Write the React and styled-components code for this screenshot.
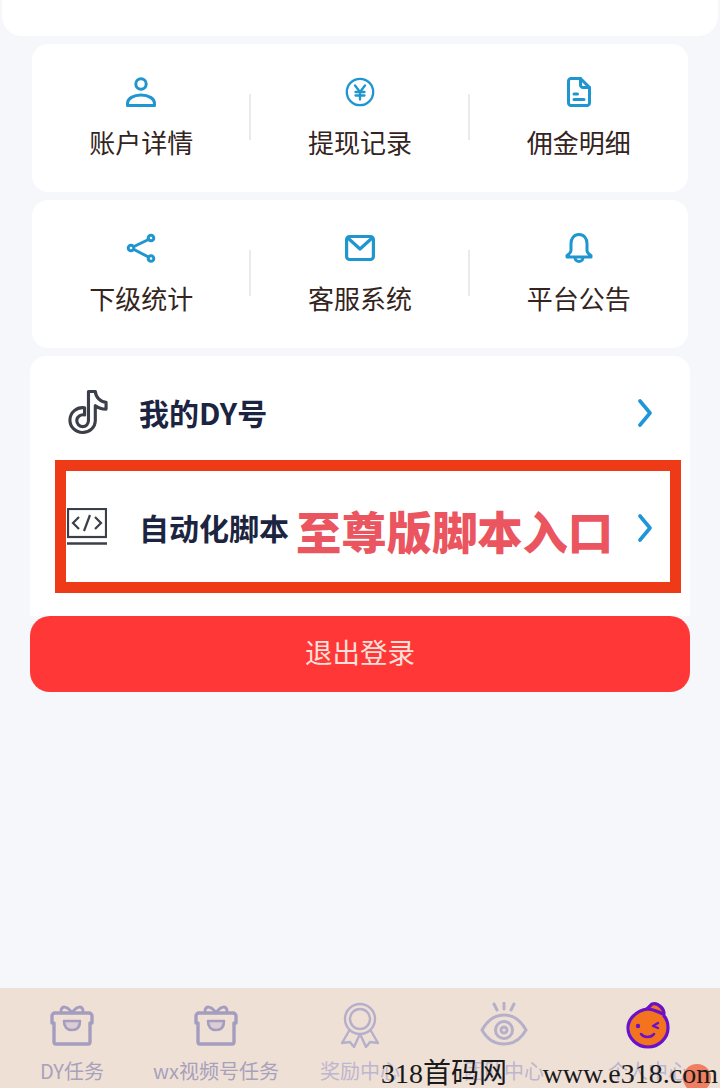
import styled, { createGlobalStyle } from "styled-components";

const GlobalStyle = createGlobalStyle`
  html, body {
    margin: 0;
    padding: 0;
    background: #f5f7fb;
    font-family: "Noto Sans CJK SC", "Liberation Sans", sans-serif;
  }
  * {
    box-sizing: border-box;
  }
`;

const BLUE = "#1f96cf";
const TAB = "#a49dc0";
const TAB_LIGHT = "#b5afca";

const Icon = ({ size = 30, color = BLUE, width = 3, children }) => (
  <svg
    width={size}
    height={size}
    viewBox="0 0 30 30"
    fill="none"
    stroke={color}
    strokeWidth={width}
    strokeLinecap="round"
    strokeLinejoin="round"
  >
    {children}
  </svg>
);

const PersonIcon = () => (
  <Icon>
    <circle cx="15" cy="7" r="5.200" />
    <path d="M1.500 28.500v-2c0-5 6-8.500 13.500-8.500s13.500 3.500 13.500 8.500v2z" />
  </Icon>
);

const YuanIcon = () => (
  <Icon width={2.300}>
    <circle cx="15" cy="15" r="13.200" />
    <path d="M10 8.500l5 6.500 5-6.500M15 15v7.500M10.500 15h9M10.500 18.500h9" />
  </Icon>
);

const DocIcon = () => (
  <Icon>
    <path d="M7 1.500h9.500l9 9v15.500a2.500 2.500 0 0 1-2.500 2.500H7a2.500 2.500 0 0 1-2.500-2.500V4A2.500 2.500 0 0 1 7 1.500z" />
    <path d="M16.500 1.500v6.500a2.500 2.500 0 0 0 2.500 2.500h6.500M10 17h3.500M10 22.500h10" />
  </Icon>
);

const ShareIcon = () => (
  <Icon>
    <circle cx="25" cy="5" r="2.800" />
    <circle cx="5" cy="15" r="2.800" />
    <circle cx="25" cy="25.500" r="2.800" />
    <path d="M8 13.500l14.500-7M8 16.500l14.500 7.500" />
  </Icon>
);

const MailIcon = () => (
  <Icon width={3.200}>
    <rect x="1.600" y="3.500" width="26.800" height="23" rx="3" />
    <path d="M4 6l11 10 11-10" />
  </Icon>
);

const BellIcon = () => (
  <Icon>
    <path d="M15 1.500c-5 0-8 4-8 9v7c0 2-1.500 3.500-4 5v1.500h24v-1.500c-2.500-1.500-4-3-4-5v-7c0-5-3-9-8-9z" />
    <path d="M11 24.500c0 2.500 2 4 4 4s4-1.500 4-4" />
  </Icon>
);

const NoteIcon = () => (
  <svg width="41" height="46" viewBox="0 0 42 46" fill="none" stroke="#3b3f49" strokeWidth="3.200" strokeLinejoin="round">
    <path d="M22 2h7c.5 6 5 10.500 11 11v7c-4.200 0-8-1.200-11-3.500v15c0 7.500-6 12.500-13 12.500S3 38.500 3 31.500c0-8 7-14 15-12.800v7.300c-4-1-8 1.800-8 5.800 0 3.500 2.800 6.200 6 6.200 3.500 0 6-2.700 6-6.500z" />
  </svg>
);

const CodeIcon = () => (
  <svg width="40" height="38" viewBox="0 0 40 38" fill="none" stroke="#3b3f49" strokeWidth="2.200">
    <rect x="1" y="1" width="38" height="28" />
    <path d="M0 35.500h40" strokeWidth="2.600" />
    <path d="M12 9l-6 6 6 6M28 9l6 6-6 6M23 7l-6 16" />
  </svg>
);

const Chevron = () => (
  <svg width="16" height="28" viewBox="0 0 16 28" fill="none" stroke="#1e96d8" strokeWidth="3.600" strokeLinecap="round" strokeLinejoin="round">
    <path d="M3 2l10 12L3 26" />
  </svg>
);

const GiftIcon = () => (
  <svg width="44" height="42" viewBox="0 0 44 42" fill="none" stroke={TAB} strokeWidth="3.400" strokeLinecap="round" strokeLinejoin="round">
    <path d="M11 7c0-5 6-6 11 2 5-8 11-7 11-2" strokeWidth="3" />
    <path d="M2 19v-7a3 3 0 0 1 3-3h34a3 3 0 0 1 3 3v7" />
    <path d="M4 19v19a2 2 0 0 0 2 2h32a2 2 0 0 0 2-2V19" />
    <path d="M14 17h16c0 6-3 9-8 9s-8-3-8-9z" fill="#ddcdd3" strokeWidth="2.600" />
  </svg>
);

const AwardIcon = () => (
  <svg width="44" height="46" viewBox="0 0 44 46" fill="none" stroke={TAB_LIGHT} strokeWidth="2.400" strokeLinecap="round" strokeLinejoin="round">
    <circle cx="22" cy="17" r="15" />
    <circle cx="22" cy="17" r="10" />
    <path d="M11 29L4 41l8-1 4 5 5-11M33 29l7 12-8-1-4 5-5-11" />
  </svg>
);

const EyeIcon = () => (
  <svg width="48" height="46" viewBox="0 0 48 46" fill="none" stroke={TAB_LIGHT} strokeWidth="3" strokeLinecap="round">
    <path d="M14 2l3 6M24 1v6M34 2l-3 6" />
    <path d="M2 28c5-9 13-15 22-15s17 6 22 15c-5 9-13 14-22 14S7 37 2 28z" />
    <circle cx="24" cy="28" r="8.500" />
    <circle cx="24" cy="28" r="3" />
  </svg>
);

const OrangeIcon = () => (
  <svg width="46" height="48" viewBox="0 0 46 48" fill="none" stroke="#6a12c8" strokeWidth="3.200" strokeLinecap="round" strokeLinejoin="round">
    <circle cx="24" cy="26" r="19.500" fill="#f3731e" stroke="none" />
    <path d="M22 8C11 10 3 18 3 27c0 10 9 19 20 19s20-9 20-19c0-5-1-9-4-12" />
    <path d="M22 8l5-5c3-1 6 0 9 3 2 2 3 4 3 7-5-1-9-5-17-5z" fill="#f3731e" />
    <circle cx="13" cy="25" r="2.200" fill="#6a12c8" stroke="none" />
    <path d="M33 22l-5 3 5 2" strokeWidth="2.400" />
    <path d="M16 33c3 4 10 4 13 0" strokeWidth="2.600" />
  </svg>
);

const gridCards = [
  [
    { label: "账户详情", icon: <PersonIcon /> },
    { label: "提现记录", icon: <YuanIcon /> },
    { label: "佣金明细", icon: <DocIcon /> },
  ],
  [
    { label: "下级统计", icon: <ShareIcon /> },
    { label: "客服系统", icon: <MailIcon /> },
    { label: "平台公告", icon: <BellIcon /> },
  ],
];

const tabs = [
  { label: "DY任务", icon: <GiftIcon /> },
  { label: "wx视频号任务", icon: <GiftIcon /> },
  { label: "奖励中心", icon: <AwardIcon />, light: true },
  { label: "团队中心", icon: <EyeIcon />, light: true },
  { label: "个人中心", icon: <OrangeIcon />, light: true },
];

const App = () => {
  return (
    <Page>
      <GlobalStyle />
      <Main>
        <TopCard />
        {gridCards.map((cells, i) => (
          <GridCard key={i}>
            {cells.map((cell, j) => (
              <Cell key={cell.label} $first={j === 0}>
                <CellIcon>{cell.icon}</CellIcon>
                <CellLabel>{cell.label}</CellLabel>
              </Cell>
            ))}
          </GridCard>
        ))}
        <ListCard>
          <Row $height={114}>
            <RowIcon>
              <NoteIcon />
            </RowIcon>
            <RowTitle>我的DY号</RowTitle>
            <Chevron />
          </Row>
          <Row $height={116}>
            <RowIcon>
              <CodeIcon />
            </RowIcon>
            <RowTitle>自动化脚本</RowTitle>
            <Chevron />
          </Row>
          <Frame />
          <FrameText>至尊版脚本入口</FrameText>
        </ListCard>
        <LogoutButton>退出登录</LogoutButton>
      </Main>
      <TabBar>
        {tabs.map((tab) => (
          <Tab key={tab.label}>
            <TabIcon>{tab.icon}</TabIcon>
            <TabLabel $light={tab.light}>{tab.label}</TabLabel>
          </Tab>
        ))}
        <FloatDot />
        <Watermark>
          <span>318首码网</span>
          <span>www.e318.com</span>
        </Watermark>
      </TabBar>
    </Page>
  );
};

const Page = styled.div`
  width: 720px;
  height: 1088px;
  display: flex;
  flex-direction: column;
  overflow: hidden;
  background: #f5f7fb;
`;

const Main = styled.main`
  flex: 1;
  display: flex;
  flex-direction: column;
`;

const TopCard = styled.div`
  height: 36px;
  margin: 0 2px;
  background: #fff;
  border-radius: 0 0 20px 20px;
`;

const GridCard = styled.section`
  height: 148px;
  margin: 8px 32px 0;
  display: flex;
  background: #fff;
  border-radius: 16px;
`;

const Cell = styled.div`
  flex: 1;
  position: relative;
  display: flex;
  flex-direction: column;
  align-items: center;
  padding-top: 33px;
  &::before {
    content: "";
    display: ${(p) => (p.$first ? "none" : "block")};
    position: absolute;
    left: -1.500px;
    top: 50px;
    width: 2px;
    height: 46px;
    background: #e8eaec;
  }
`;

const CellIcon = styled.div`
  height: 30px;
  display: flex;
`;

const CellLabel = styled.div`
  margin-top: 16px;
  font-size: 26px;
  line-height: 38px;
  color: #33241d;
`;

const ListCard = styled.section`
  position: relative;
  margin: 8px 30px 0;
  padding: 0 37px 30px 37px;
  background: #fff;
  border-radius: 16px 16px 0 0;
`;

const Row = styled.div`
  height: ${(p) => p.$height}px;
  display: flex;
  align-items: center;
`;

const RowIcon = styled.div`
  width: 72px;
  display: flex;
  padding-bottom: 2px;
`;

const RowTitle = styled.div`
  flex: 1;
  padding-bottom: 3px;
  font-size: 30px;
  font-weight: 700;
  color: #1b2440;
`;

const Frame = styled.div`
  position: absolute;
  left: 25px;
  top: 104px;
  width: 626px;
  height: 133px;
  border: 11px solid #ee3a17;
`;

const FrameText = styled.div`
  position: absolute;
  left: 266px;
  top: 141px;
  font-size: 45.300px;
  line-height: 66px;
  font-weight: 900;
  color: #ea5560;
  white-space: nowrap;
`;

const LogoutButton = styled.button`
  height: 76px;
  margin: 0 30px;
  padding: 0 0 6px;
  border: none;
  border-radius: 20px;
  background: #ff3737;
  color: #fde0da;
  font-family: inherit;
  font-size: 27.500px;
`;

const TabBar = styled.nav`
  position: relative;
  height: 100px;
  display: grid;
  grid-template-columns: repeat(5, 1fr);
  background: #efe0d6;
  overflow: hidden;
`;

const Tab = styled.div`
  display: flex;
  flex-direction: column;
  align-items: center;
`;

const TabIcon = styled.div`
  height: 46px;
  margin-top: 14px;
  display: flex;
  align-items: center;
`;

const TabLabel = styled.div`
  margin-top: 8px;
  font-size: 20px;
  line-height: 30px;
  color: ${(p) => (p.$light ? "#bdb6cf" : "#a8a1bc")};
  white-space: nowrap;
`;

const Watermark = styled.div`
  position: absolute;
  left: 381px;
  bottom: -6px;
  width: 337px;
  display: flex;
  justify-content: space-between;
  font-family: "Liberation Serif", "Noto Sans CJK SC", serif;
  font-size: 28px;
  line-height: 40px;
  color: #1a1a1a;
  white-space: nowrap;
`;

const FloatDot = styled.div`
  position: absolute;
  right: 9px;
  bottom: -4px;
  width: 28px;
  height: 28px;
  border-radius: 50%;
  background: #ef7f60;
`;

export default App;
